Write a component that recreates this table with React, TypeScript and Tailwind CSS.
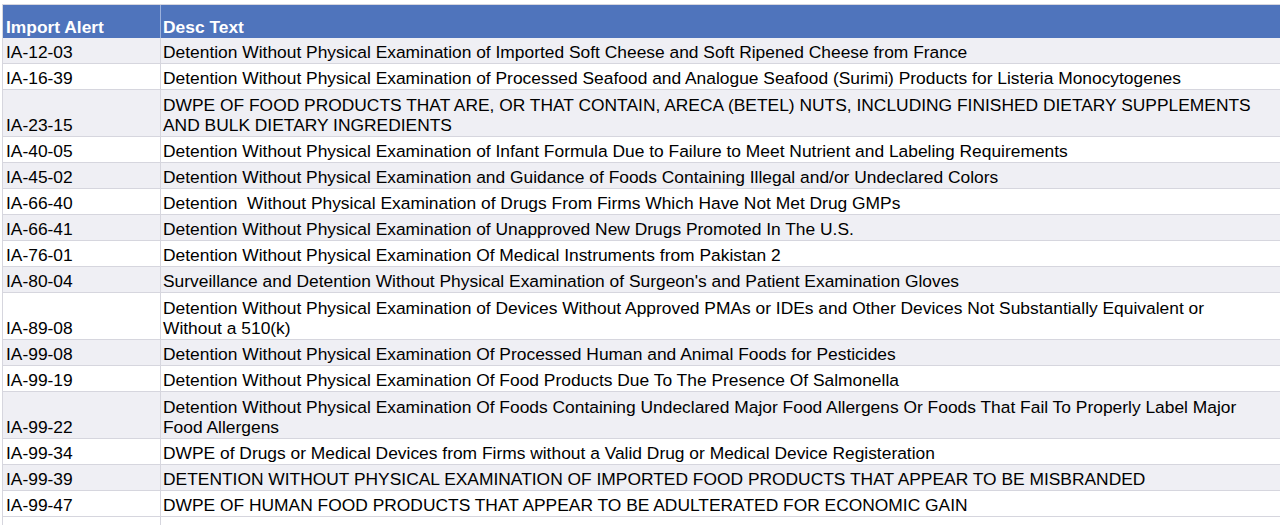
const rows: { id: string; desc: string[] }[] = [
  { id: "IA-12-03", desc: ["Detention Without Physical Examination of Imported Soft Cheese and Soft Ripened Cheese from France"] },
  { id: "IA-16-39", desc: ["Detention Without Physical Examination of Processed Seafood and Analogue Seafood (Surimi) Products for Listeria Monocytogenes"] },
  {
    id: "IA-23-15",
    desc: [
      "DWPE OF FOOD PRODUCTS THAT ARE, OR THAT CONTAIN, ARECA (BETEL) NUTS, INCLUDING FINISHED DIETARY SUPPLEMENTS",
      "AND BULK DIETARY INGREDIENTS",
    ],
  },
  { id: "IA-40-05", desc: ["Detention Without Physical Examination of Infant Formula Due to Failure to Meet Nutrient and Labeling Requirements"] },
  { id: "IA-45-02", desc: ["Detention Without Physical Examination and Guidance of Foods Containing Illegal and/or Undeclared Colors"] },
  { id: "IA-66-40", desc: ["Detention \u00a0Without Physical Examination of Drugs From Firms Which Have Not Met Drug GMPs"] },
  { id: "IA-66-41", desc: ["Detention Without Physical Examination of Unapproved New Drugs Promoted In The U.S."] },
  { id: "IA-76-01", desc: ["Detention Without Physical Examination Of Medical Instruments from Pakistan 2"] },
  { id: "IA-80-04", desc: ["Surveillance and Detention Without Physical Examination of Surgeon's and Patient Examination Gloves"] },
  {
    id: "IA-89-08",
    desc: [
      "Detention Without Physical Examination of Devices Without Approved PMAs or IDEs and Other Devices Not Substantially Equivalent or",
      "Without a 510(k)",
    ],
  },
  { id: "IA-99-08", desc: ["Detention Without Physical Examination Of Processed Human and Animal Foods for Pesticides"] },
  { id: "IA-99-19", desc: ["Detention Without Physical Examination Of Food Products Due To The Presence Of Salmonella"] },
  {
    id: "IA-99-22",
    desc: [
      "Detention Without Physical Examination Of Foods Containing Undeclared Major Food Allergens Or Foods That Fail To Properly Label Major",
      "Food Allergens",
    ],
  },
  { id: "IA-99-34", desc: ["DWPE of Drugs or Medical Devices from Firms without a Valid Drug or Medical Device Registeration"] },
  { id: "IA-99-39", desc: ["DETENTION WITHOUT PHYSICAL EXAMINATION OF IMPORTED FOOD PRODUCTS THAT APPEAR TO BE MISBRANDED"] },
  { id: "IA-99-47", desc: ["DWPE OF HUMAN FOOD PRODUCTS THAT APPEAR TO BE ADULTERATED FOR ECONOMIC GAIN"] },
];

export default function App() {
  return (
    <div
      className="w-[1280px] h-[525px] overflow-hidden bg-white pt-[4px] pl-[2px] text-black"
      style={{ fontFamily: '"Liberation Sans", Arial, Helvetica, sans-serif' }}
    >
      <div className="border-t border-l border-[#d6d6de]">
        {/* header */}
        <div className="flex h-[33px] bg-[#4f74bc] text-white font-bold text-[17.4px] leading-[20px]">
          <div className="w-[158px] shrink-0 flex items-end pl-[3px] pb-[1px] border-r border-[#9cb1dc]">
            Import Alert
          </div>
          <div className="flex-1 flex items-end pl-[2px] pb-[1px] whitespace-nowrap">Desc Text</div>
        </div>

        {/* body */}
        {rows.map((r, i) => (
          <div
            key={r.id}
            className={`flex border-b border-[#d6d6de] text-[17.4px] leading-[20px] ${
              r.desc.length > 1 ? "h-[47px]" : "h-[26px]"
            } ${i % 2 === 0 ? "bg-[#efeff4]" : "bg-white"}`}
          >
            <div className="w-[158px] shrink-0 flex items-end pl-[3px] pb-[1px] border-r border-[#d6d6de]">
              {r.id}
            </div>
            <div className="flex-1 flex flex-col justify-end pl-[2px] pb-[1px] whitespace-nowrap">
              {r.desc.map((line) => (
                <span key={line}>{line}</span>
              ))}
            </div>
          </div>
        ))}

        {/* empty trailing row */}
        <div className="flex h-[26px] bg-white">
          <div className="w-[158px] shrink-0 border-r border-[#d6d6de]" />
          <div className="flex-1" />
        </div>
      </div>
    </div>
  );
}
